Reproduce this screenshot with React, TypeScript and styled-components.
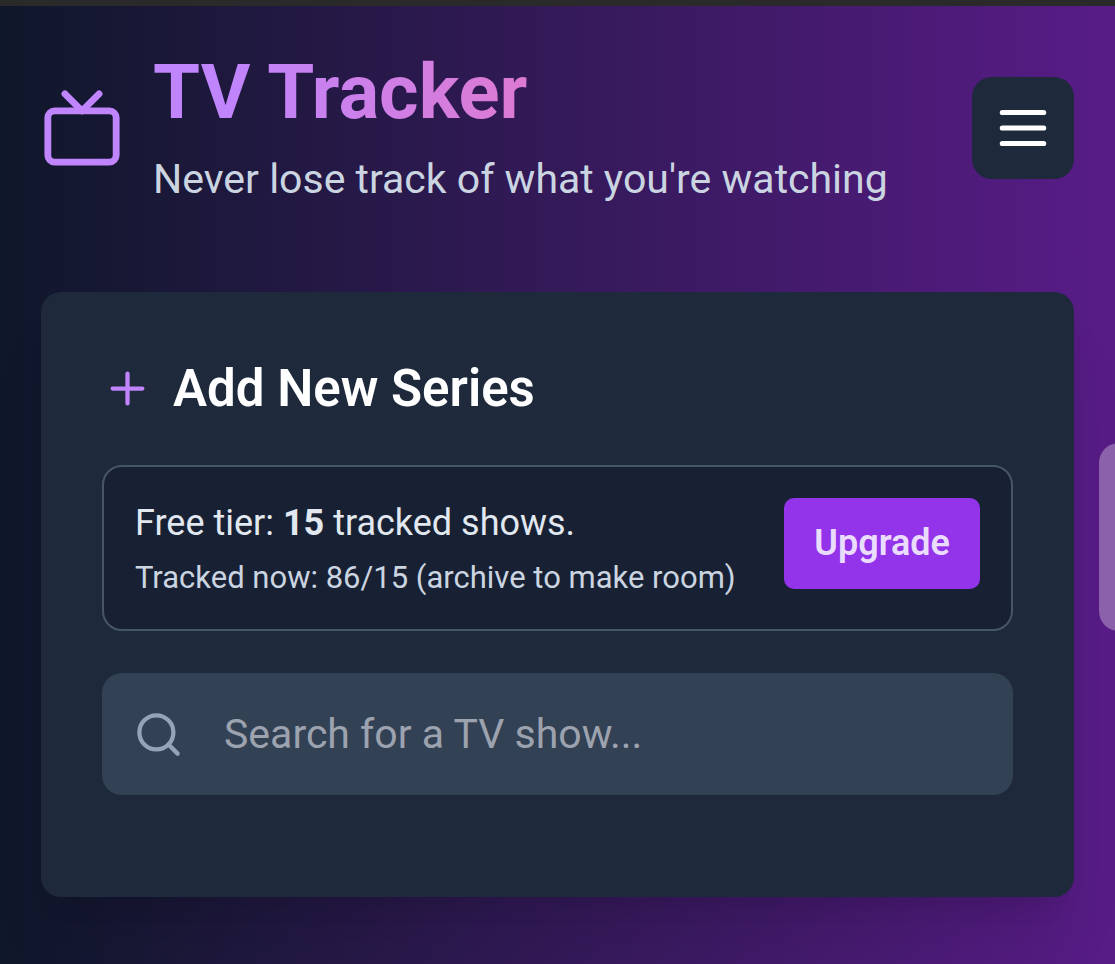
import React, { useState } from 'react';
import styled, { createGlobalStyle } from 'styled-components';

const GlobalStyle = createGlobalStyle`
  *, *::before, *::after { box-sizing: border-box; }
  body {
    margin: 0;
    background: #0f172a;
    color: #ffffff;
    font-family: Roboto, "Liberation Sans", sans-serif;
  }
  button, input { font-family: inherit; }
`;

const Page = styled.div`
  min-height: 100vh;
  border-top: 6px solid #2a2a2a;
  background: linear-gradient(90deg, #0f172a 0%, #581c87 100%) padding-box;
  overflow: hidden;
`;

const Content = styled.div`
  padding: 40px 41px;
`;

const Header = styled.header`
  display: flex;
  align-items: center;
  justify-content: space-between;
  gap: 30px;
  margin-bottom: 82px;
`;

const Brand = styled.div`
  display: flex;
  align-items: center;
  gap: 30px;
`;

const Title = styled.h1`
  width: fit-content;
  margin: 0 0 11px;
  font-size: 76px;
  line-height: 92px;
  font-weight: 700;
  color: transparent;
  background: linear-gradient(90deg, #c084fc 0%, #c084fc 20%, #dd7ad2 100%);
  background-clip: text;
  -webkit-background-clip: text;
`;

const Tagline = styled.p`
  margin: 0;
  font-size: 41px;
  line-height: 61px;
  color: #cbd5e1;
`;

const MenuButton = styled.button`
  display: flex;
  flex: none;
  padding: 20px;
  border: 0;
  border-radius: 20px;
  background: #1e293b;
  color: #ffffff;
  cursor: pointer;
`;

const Card = styled.main`
  padding: 61px;
  border-radius: 20px;
  background: #1e293b;
  box-shadow: 0 51px 64px -13px rgba(0, 0, 0, 0.1), 0 20px 26px -15px rgba(0, 0, 0, 0.1);
`;

const CardHeading = styled.h2`
  display: flex;
  align-items: center;
  gap: 20px;
  margin: 0 0 41px;
  font-size: 51px;
  line-height: 71px;
  font-weight: 600;
`;

const TierNotice = styled.section`
  display: flex;
  align-items: flex-start;
  justify-content: space-between;
  gap: 30px;
  margin-bottom: 42px;
  padding: 31px;
  border: 2px solid #475569;
  border-radius: 20px;
  background: #182133;
`;

const TierLimit = styled.p`
  margin: 0 0 8px;
  font-size: 36px;
  line-height: 51px;
  color: #e2e8f0;
`;

const TierUsage = styled.p`
  margin: 0;
  font-size: 31px;
  line-height: 41px;
  color: #cbd5e1;
`;

const UpgradeButton = styled.button`
  flex: none;
  padding: 20px 30px;
  border: 0;
  border-radius: 10px;
  background: #9333ea;
  color: #eadcfd;
  font-size: 36px;
  line-height: 51px;
  font-weight: 600;
  cursor: pointer;
`;

const SearchField = styled.label`
  display: flex;
  align-items: center;
  gap: 40px;
  margin-bottom: 41px;
  padding: 0 31px;
  border-radius: 20px;
  background: #334155;
  color: #94a3b8;
`;

const SearchInput = styled.input`
  flex: 1;
  min-width: 0;
  height: 122px;
  padding: 0;
  border: 0;
  outline: 0;
  background: transparent;
  color: #ffffff;
  font-size: 41px;
  &::placeholder { color: #9ca3af; opacity: 1; }
`;

const EdgeHandle = styled.div`
  position: fixed;
  top: 443px;
  right: -24px;
  width: 40px;
  height: 188px;
  border-radius: 20px;
  background: rgba(255, 255, 255, 0.31);
`;

const Icon = styled.svg.attrs({
  viewBox: '0 0 24 24',
  fill: 'none',
  stroke: 'currentColor',
  strokeWidth: 2,
  strokeLinecap: 'round',
  strokeLinejoin: 'round',
  'aria-hidden': true,
})<{ $size: number; $accent?: boolean }>`
  flex: none;
  width: ${(p) => p.$size}px;
  height: ${(p) => p.$size}px;
  color: ${(p) => (p.$accent ? '#c084fc' : 'inherit')};
`;

export default function App() {
  const [query, setQuery] = useState('');

  return (
    <>
      <GlobalStyle />
      <Page>
        <Content>
          <Header>
            <Brand>
              <Icon $size={82} $accent>
                <rect x="2" y="7" width="20" height="15" rx="2" />
                <path d="m17 2-5 5-5-5" />
              </Icon>
              <div>
                <Title>TV Tracker</Title>
                <Tagline>Never lose track of what you're watching</Tagline>
              </div>
            </Brand>
            <MenuButton type="button" aria-label="Menu">
              <Icon $size={62}>
                <path d="M4 6h16M4 12h16M4 18h16" />
              </Icon>
            </MenuButton>
          </Header>

          <Card>
            <CardHeading>
              <Icon $size={51} $accent>
                <path d="M5 12h14M12 5v14" />
              </Icon>
              Add New Series
            </CardHeading>

            <TierNotice>
              <div>
                <TierLimit>
                  Free tier: <strong>15</strong> tracked shows.
                </TierLimit>
                <TierUsage>Tracked now: 86/15 (archive to make room)</TierUsage>
              </div>
              <UpgradeButton type="button">Upgrade</UpgradeButton>
            </TierNotice>

            <SearchField>
              <Icon $size={51}>
                <circle cx="11" cy="11" r="8" />
                <path d="m21 21-4.3-4.3" />
              </Icon>
              <SearchInput
                type="text"
                aria-label="Search for a TV show"
                placeholder="Search for a TV show..."
                value={query}
                onChange={(e) => setQuery(e.target.value)}
              />
            </SearchField>
          </Card>
        </Content>
        <EdgeHandle />
      </Page>
    </>
  );
}
